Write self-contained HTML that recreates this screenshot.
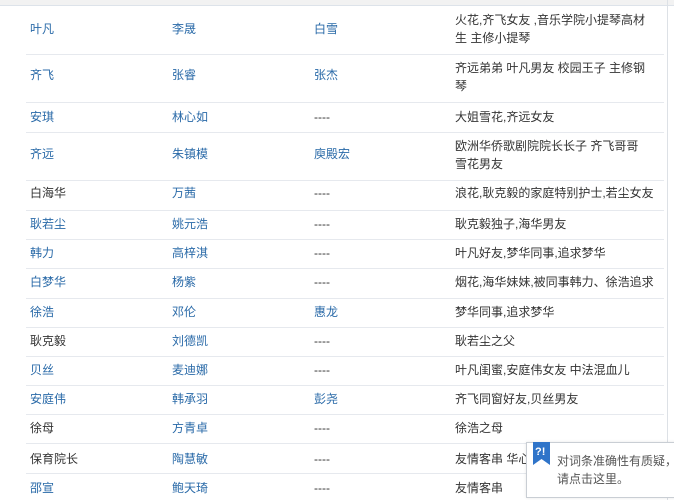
<!DOCTYPE html>
<html><head><meta charset="utf-8"><style>
body{margin:0;width:674px;height:500px;overflow:hidden;background:#fff;font-family:"Liberation Sans","Noto Sans CJK SC",sans-serif;font-size:12px;position:relative}
.top{position:absolute;left:0;top:0;width:674px;height:5px;background:#f2f2f2;border-bottom:1px solid #dde3ea}
.ln{position:absolute;left:26px;width:638px;height:1px;background:#e6e9ee}
.t{position:absolute;line-height:18px;white-space:nowrap}
.b{color:#2a6aa8}.k{color:#333}
.vr{position:absolute;left:667px;top:0;width:1px;height:500px;background:#dde1e6}
.tip{position:absolute;left:526px;top:442px;width:160px;height:54px;background:#fff;border:1px solid #c9ced4;box-shadow:0 0 3px rgba(0,0,0,.1)}
</style></head><body>
<div class="top"></div><div class="vr"></div>
<div class="ln" style="top:54px"></div><div class="ln" style="top:102px"></div><div class="ln" style="top:132px"></div><div class="ln" style="top:180px"></div><div class="ln" style="top:210px"></div><div class="ln" style="top:239px"></div><div class="ln" style="top:268px"></div><div class="ln" style="top:298px"></div><div class="ln" style="top:327px"></div><div class="ln" style="top:356px"></div><div class="ln" style="top:385px"></div><div class="ln" style="top:414px"></div><div class="ln" style="top:443px"></div><div class="ln" style="top:473px"></div>

<div class="t b" style="left:30px;top:20px">叶凡</div><div class="t b" style="left:172px;top:20px">李晟</div><div class="t b" style="left:314px;top:20px">白雪</div>
<div class="t k" style="left:455px;top:11px">火花,齐飞女友 ,音乐学院小提琴高材<br>生 主修小提琴</div>
<div class="t b" style="left:30px;top:66px">齐飞</div><div class="t b" style="left:172px;top:66px">张睿</div><div class="t b" style="left:314px;top:66px">张杰</div>
<div class="t k" style="left:455px;top:59px">齐远弟弟 叶凡男友 校园王子 主修钢<br>琴</div>
<div class="t b" style="left:30px;top:108px">安琪</div><div class="t b" style="left:172px;top:108px">林心如</div><div class="t k" style="left:314px;top:108px">----</div><div class="t k" style="left:455px;top:108px">大姐雪花,齐远女友</div>
<div class="t b" style="left:30px;top:145px">齐远</div><div class="t b" style="left:172px;top:145px">朱镇模</div><div class="t b" style="left:314px;top:145px">庾殿宏</div>
<div class="t k" style="left:455px;top:137px">欧洲华侨歌剧院院长长子 齐飞哥哥<br>雪花男友</div>
<div class="t k" style="left:30px;top:184px">白海华</div><div class="t b" style="left:172px;top:184px">万茜</div><div class="t k" style="left:314px;top:184px">----</div><div class="t k" style="left:455px;top:184px">浪花,耿克毅的家庭特别护士,若尘女友</div>
<div class="t b" style="left:30px;top:215px">耿若尘</div><div class="t b" style="left:172px;top:215px">姚元浩</div><div class="t k" style="left:314px;top:215px">----</div><div class="t k" style="left:455px;top:215px">耿克毅独子,海华男友</div>
<div class="t b" style="left:30px;top:244px">韩力</div><div class="t b" style="left:172px;top:244px">高梓淇</div><div class="t k" style="left:314px;top:244px">----</div><div class="t k" style="left:455px;top:244px">叶凡好友,梦华同事,追求梦华</div>
<div class="t b" style="left:30px;top:273px">白梦华</div><div class="t b" style="left:172px;top:273px">杨紫</div><div class="t k" style="left:314px;top:273px">----</div><div class="t k" style="left:455px;top:273px">烟花,海华妹妹,被同事韩力、徐浩追求</div>
<div class="t b" style="left:30px;top:303px">徐浩</div><div class="t b" style="left:172px;top:303px">邓伦</div><div class="t b" style="left:314px;top:303px">惠龙</div><div class="t k" style="left:455px;top:303px">梦华同事,追求梦华</div>
<div class="t k" style="left:30px;top:332px">耿克毅</div><div class="t b" style="left:172px;top:332px">刘德凯</div><div class="t k" style="left:314px;top:332px">----</div><div class="t k" style="left:455px;top:332px">耿若尘之父</div>
<div class="t b" style="left:30px;top:361px">贝丝</div><div class="t b" style="left:172px;top:361px">麦迪娜</div><div class="t k" style="left:314px;top:361px">----</div><div class="t k" style="left:455px;top:361px">叶凡闺蜜,安庭伟女友 中法混血儿</div>
<div class="t b" style="left:30px;top:390px">安庭伟</div><div class="t b" style="left:172px;top:390px">韩承羽</div><div class="t b" style="left:314px;top:390px">彭尧</div><div class="t k" style="left:455px;top:390px">齐飞同窗好友,贝丝男友</div>
<div class="t k" style="left:30px;top:419px">徐母</div><div class="t b" style="left:172px;top:419px">方青卓</div><div class="t k" style="left:314px;top:419px">----</div><div class="t k" style="left:455px;top:419px">徐浩之母</div>
<div class="t k" style="left:30px;top:450px">保育院长</div><div class="t b" style="left:172px;top:450px">陶慧敏</div><div class="t k" style="left:314px;top:450px">----</div><div class="t k" style="left:455px;top:450px">友情客串 华心</div>
<div class="t b" style="left:30px;top:479px">邵宣</div><div class="t b" style="left:172px;top:479px">鲍天琦</div><div class="t k" style="left:314px;top:479px">----</div><div class="t k" style="left:455px;top:479px">友情客串</div>

<div class="tip"></div>
<svg style="position:absolute;left:533px;top:442px" width="18" height="24" viewBox="0 0 18 24"><path d="M0 0H17V23L8.5 17L0 23Z" fill="#2f74c9"/><text x="2" y="13" font-size="11" font-weight="bold" fill="#fff" font-family="Liberation Sans,sans-serif">?!</text></svg>
<div class="t" style="left:557px;top:452px;color:#555">对词条准确性有质疑，<br>请点击这里。</div>
</body></html>
